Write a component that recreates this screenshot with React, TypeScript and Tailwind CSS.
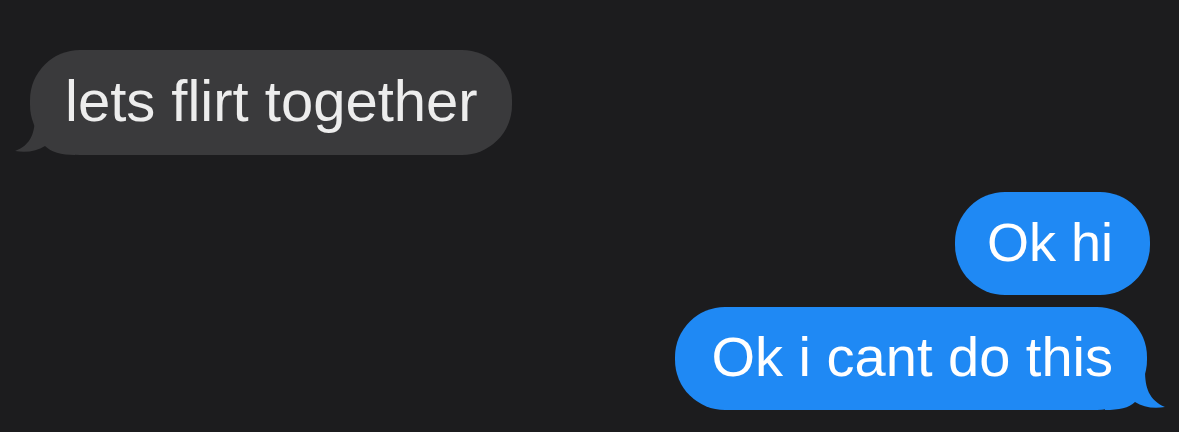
export default function App() {
  return (
    <div className="w-[1179px] h-[432px] bg-[#1c1c1e] overflow-hidden flex flex-col pt-[50px] px-[30px] font-['Liberation_Sans',Arial,sans-serif]">
      {/* incoming */}
      <div className="relative self-start h-[105px] rounded-[50px] bg-[#3a3a3c] pl-[35px] pr-[34px] flex items-center">
        <svg className="absolute -left-[15px] bottom-0" width="60" height="40" viewBox="0 0 60 40">
          <path d="M60 0 L20 0 C20 18 16 30 0 36 C12 38 22 36 30 31 C36 37 46 40 60 40 Z" fill="#3a3a3c" />
        </svg>
        <span className="relative z-10 text-[58px] leading-none text-[#ededed] -mt-[4px]">lets flirt together</span>
      </div>

      {/* outgoing */}
      <div className="self-end mt-[37px] mr-[-1px] h-[103px] rounded-[50px] bg-[#1f89f4] pl-[32px] pr-[37px] flex items-center">
        <span className="text-[54px] leading-none text-white -mt-[4px]">Ok hi</span>
      </div>
      <div className="relative self-end mt-[12px] mr-[2px] h-[103px] rounded-[50px] bg-[#1f89f4] pl-[36px] pr-[34px] flex items-center">
        <svg className="absolute -right-[18px] bottom-0" width="60" height="40" viewBox="0 0 60 40">
          <path d="M0 0 L40 0 C40 18 44 30 60 37 C48 39 38 37 30 32 C24 38 14 40 0 40 Z" fill="#1f89f4" />
        </svg>
        <span className="relative z-10 text-[56px] leading-none text-white -mt-[4px]">Ok i cant do this</span>
      </div>
    </div>
  );
}
